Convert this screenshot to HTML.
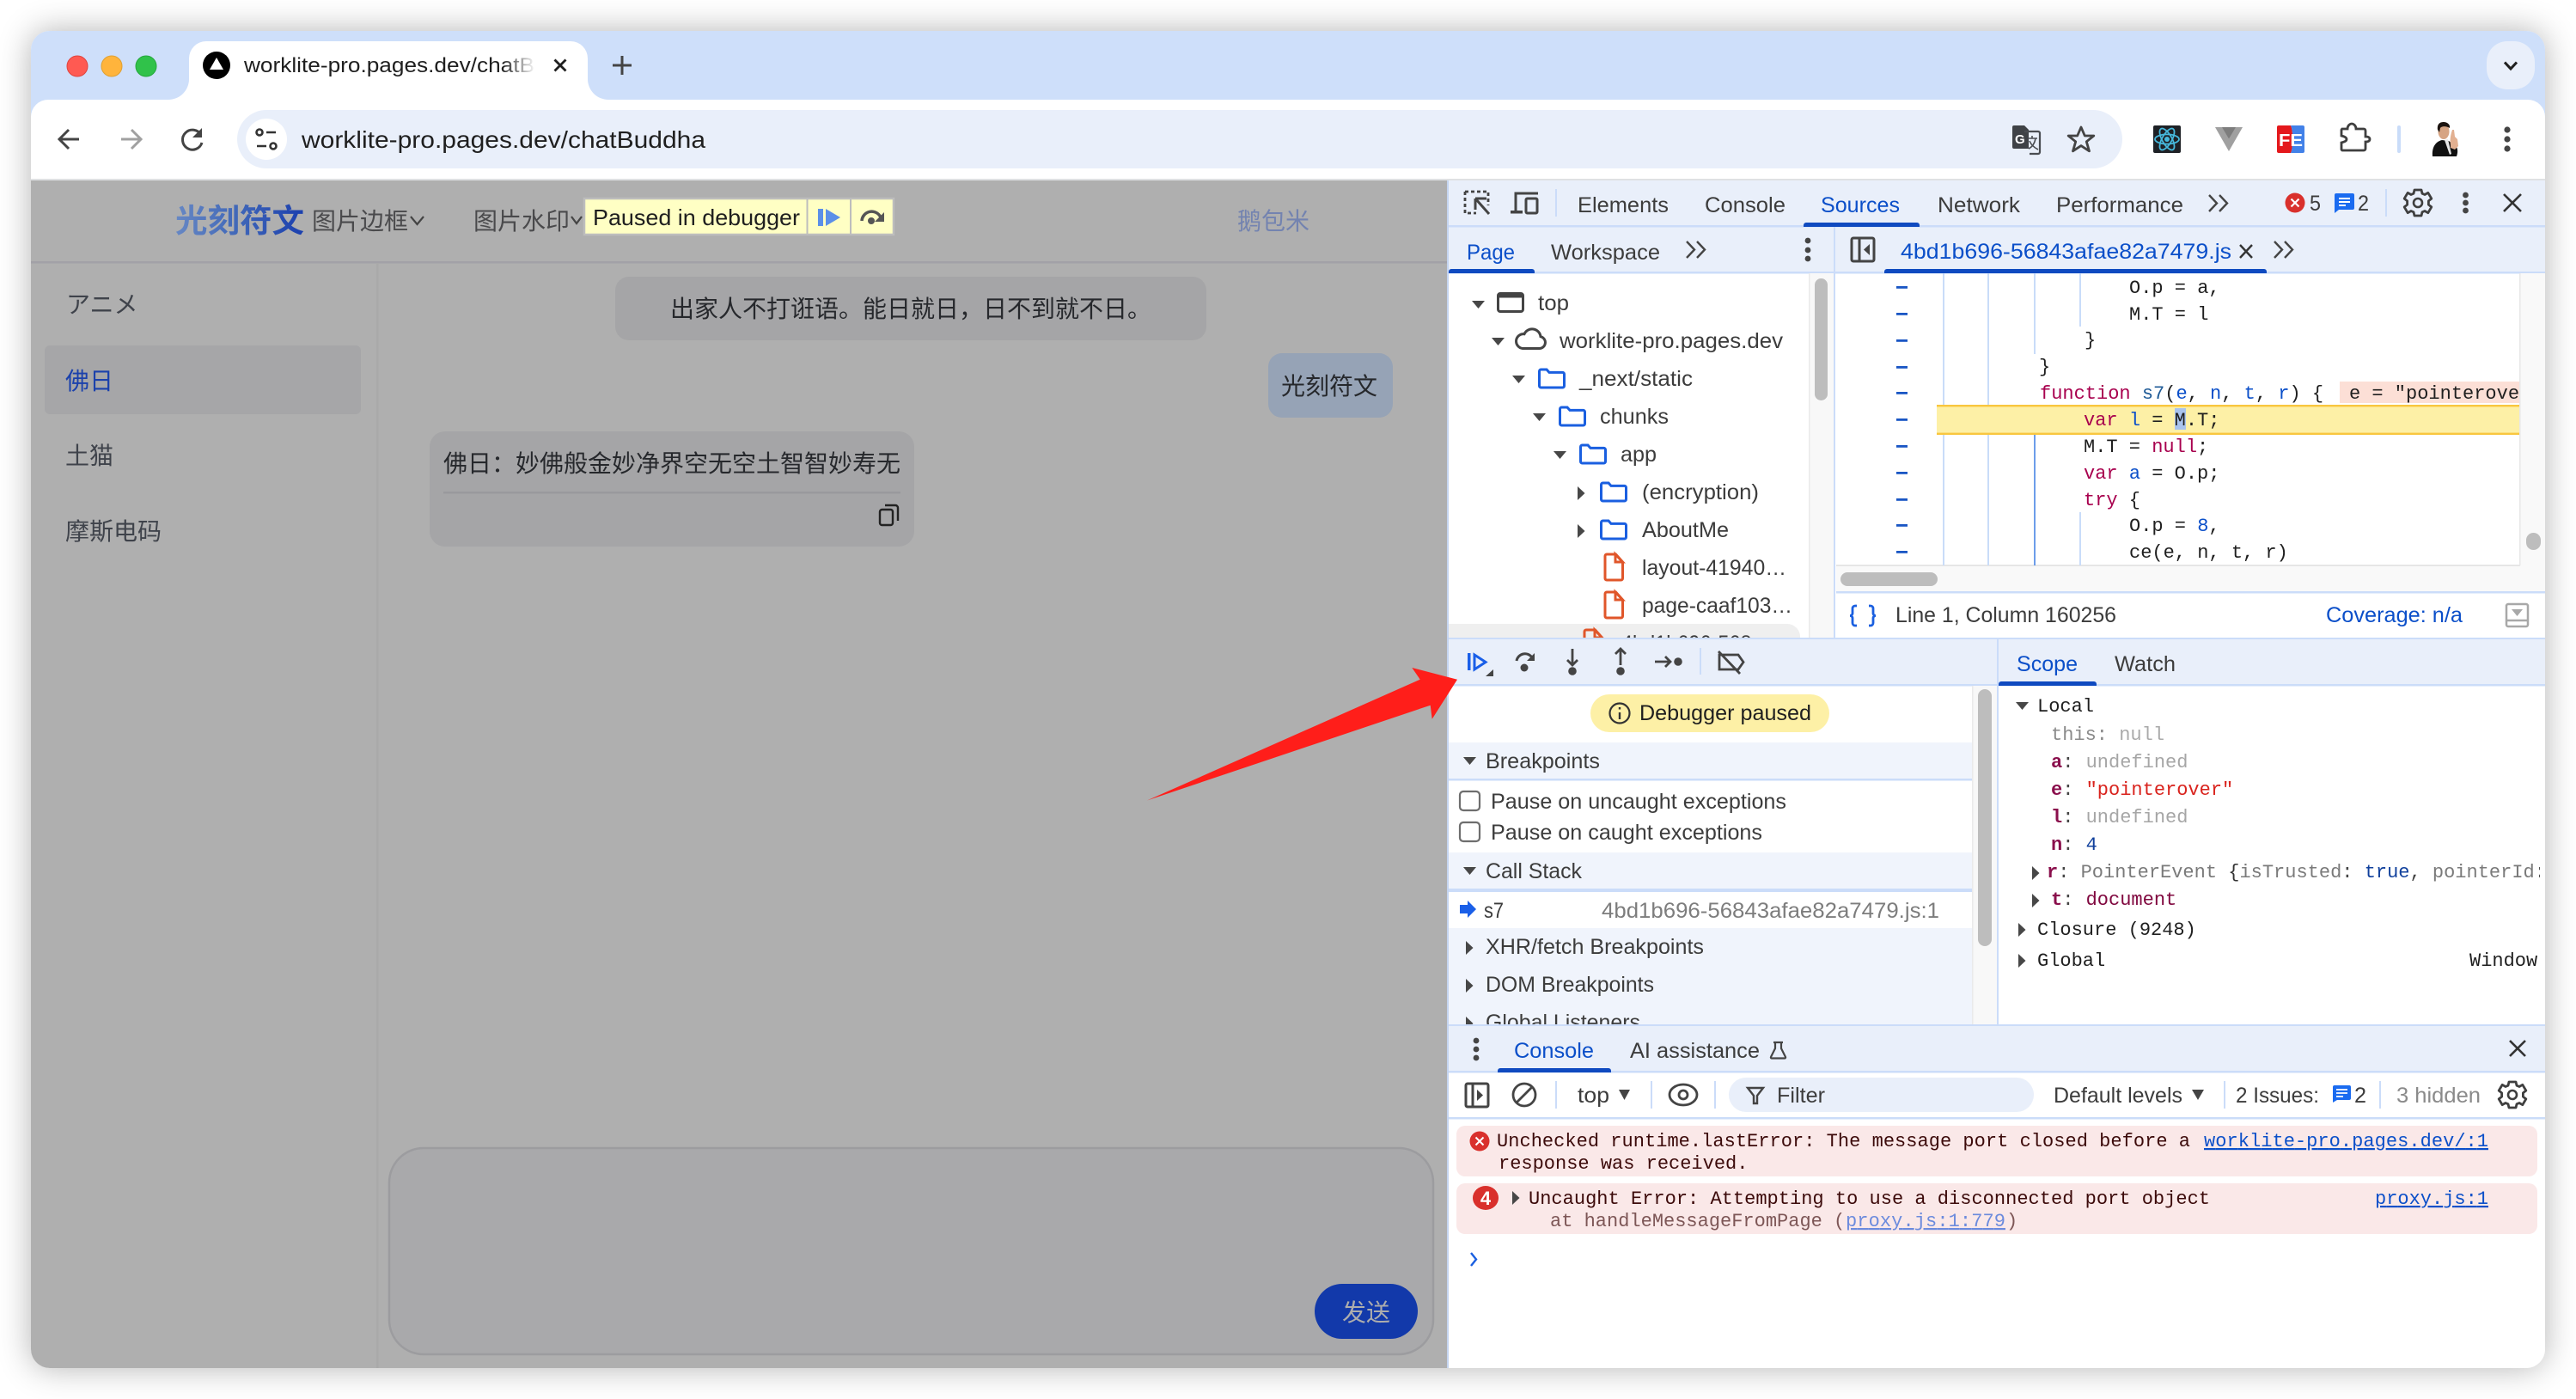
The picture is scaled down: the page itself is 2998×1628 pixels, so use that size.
<!DOCTYPE html>
<html lang="zh">
<head>
<meta charset="utf-8">
<title>worklite-pro.pages.dev/chatBuddha</title>
<style>
html,body{margin:0;padding:0;background:#fff;width:2998px;height:1628px;overflow:hidden}
#win{position:absolute;left:36px;top:36px;width:2926px;height:1556px;border-radius:22px;box-shadow:0 0 38px rgba(0,0,0,.3)}
svg{position:absolute;left:0;top:0}
text{white-space:pre}
.s{font-family:"Liberation Sans","Noto Sans CJK SC",sans-serif;fill:#1f1f1f}
.d{font-family:"Liberation Sans",sans-serif;font-size:25px;fill:#3c3c3c}
.b{fill:#0b4fc9}
.m{font-family:"Liberation Mono",monospace;font-size:22px;fill:#1f1f1f}
.c{font-family:"Liberation Sans","Noto Sans CJK SC",sans-serif;font-size:28px;fill:#26282c}
.i{fill:none;stroke:#444;stroke-width:2.6}
</style>
</head>
<body>
<div id="win"></div>
<svg width="2998" height="1628" viewBox="0 0 2998 1628" xmlns="http://www.w3.org/2000/svg">
<defs>
<clipPath id="w"><rect x="36" y="36" width="2926" height="1556" rx="22"/></clipPath>
<clipPath id="nav"><rect x="1686" y="318" width="420" height="424"/></clipPath>
<clipPath id="dbg"><rect x="1686" y="800" width="610" height="392"/></clipPath>
<clipPath id="code"><rect x="2137" y="318" width="795" height="340"/></clipPath>
<clipPath id="scope"><rect x="2326" y="800" width="630" height="392"/></clipPath>
<linearGradient id="logo" x1="0" x2="1" y1="0" y2="0"><stop offset="0" stop-color="#6788c4"/><stop offset=".5" stop-color="#3f66b8"/><stop offset="1" stop-color="#1b3fae"/></linearGradient>
<linearGradient id="fade" x1="0" x2="1" y1="0" y2="0"><stop offset="0" stop-color="#fff" stop-opacity="0"/><stop offset="1" stop-color="#fff"/></linearGradient>
<path id="folder" d="M1.5 4 a2 2 0 0 1 2-2 h6.5 l3 3.4 h15.5 a2 2 0 0 1 2 2 V21 a2 2 0 0 1-2 2 h-25 a2 2 0 0 1-2-2z" fill="none" stroke="#1a5fe0" stroke-width="3"/>
<path id="file" d="M2 3 a2 2 0 0 1 2-2 h10.5 l8 9 V29 a2 2 0 0 1-2 2 h-16.5 a2 2 0 0 1-2-2z M14 1 v9 h8.5 z" fill="none" stroke="#e0562a" stroke-width="3"/>
<path id="td" d="M0 0h15l-7.5 9z" fill="#474747"/>
<path id="tr" d="M0 0l8.5 8-8.5 8z" fill="#474747"/>
<path id="gear" d="M-4-15h8l1 4.2 3 1.3 3.8-2.2 4 6.8-3.4 2.7v4.4l3.4 2.7-4 6.8-3.8-2.2-3 1.3-1 4.2h-8l-1-4.2-3-1.3-3.8 2.2-4-6.8 3.4-2.7v-4.4l-3.4-2.7 4-6.8 3.8 2.2 3-1.3z" fill="none" stroke="#3f3f3f" stroke-width="2.8" stroke-linejoin="round"/>
</defs>

<g clip-path="url(#w)">
<!-- frame -->
<rect x="36" y="36" width="2926" height="80" fill="#cedffa"/>
<rect x="36" y="116" width="2926" height="92" fill="#fff"/>
<path d="M36 136 a20 20 0 0 1 20-20 H36z" fill="#cedffa"/>
<path d="M2962 136 a20 20 0 0 0-20-20 h20z" fill="#cedffa"/>
<rect x="36" y="208" width="2926" height="2" fill="#dfe1e3"/>

<!-- traffic lights -->
<circle cx="90" cy="77" r="12" fill="#ff5a52" stroke="#e0443e" stroke-width="1"/>
<circle cx="130" cy="77" r="12" fill="#ffb43c" stroke="#dea034" stroke-width="1"/>
<circle cx="170" cy="77" r="12" fill="#30c24a" stroke="#26a83c" stroke-width="1"/>

<!-- tab -->
<path d="M196 116 a24 24 0 0 0 24-24 V68 a20 20 0 0 1 20-20 H664 a20 20 0 0 1 20 20 V92 a24 24 0 0 0 24 24z" fill="#fff"/>
<circle cx="252" cy="76" r="16" fill="#000"/>
<path d="M252 67 l8 14 h-16z" fill="#fff"/>
<text class="s" x="284" y="84" font-size="24" textLength="338" lengthAdjust="spacingAndGlyphs">worklite-pro.pages.dev/chatB</text>
<rect x="585" y="60" width="38" height="34" fill="url(#fade)"/>
<path d="M645.500 69.500 l13 13 M658.500 69.500 l-13 13" stroke="#1f1f1f" stroke-width="2.800" fill="none"/>
<path d="M724 65 v22 M713 76 h22" stroke="#444" stroke-width="3" fill="none"/>
<rect x="2894" y="48" width="56" height="56" rx="24" fill="#e9effa"/>
<path d="M2915 72.500 l7 7.500 7-7.500" stroke="#1f1f1f" stroke-width="3" fill="none"/>

<!-- toolbar -->
<path d="M92 162 H70 M80 151 L69 162 80 173" fill="none" stroke="#444" stroke-width="3"/>
<path d="M141 162 H163 M153 151 L164 162 153 173" fill="none" stroke="#a0a0a0" stroke-width="3"/>
<path d="M234 157 A11.500 11.500 0 1 0 235 166" fill="none" stroke="#444" stroke-width="3"/>
<path d="M235 149 v11 h-11z" fill="#444"/>
<rect x="276" y="128" width="2194" height="68" rx="34" fill="#e9effa"/>
<circle cx="310" cy="162" r="24" fill="#fff"/>
<g fill="none" stroke="#333" stroke-width="2.600"><circle cx="302" cy="154" r="3.500"/><path d="M310 154 h11 M299 170 h11"/><circle cx="318" cy="170" r="3.500"/></g>
<text class="s" x="351" y="172" font-size="28" textLength="470" lengthAdjust="spacingAndGlyphs">worklite-pro.pages.dev/chatBuddha</text>

<!-- translate icon -->
<path d="M2344 146 h12 l5 5 v22 h-17 a2 2 0 0 1-2-2 v-23 a2 2 0 0 1 2-2z" fill="#3f4246"/>
<path d="M2356 153 h16 a2 2 0 0 1 2 2 v22 a2 2 0 0 1-2 2 h-10" fill="none" stroke="#4a4d52" stroke-width="2.200"/>
<text x="2345" y="167" font-family="Liberation Sans,sans-serif" font-weight="bold" font-size="15" fill="#fff">G</text>
<path d="M2360 161 h11 M2365 158 v3 M2369 161 c-1 6-4 10-8 12 M2362 164 c2 5 6 8 10 10" fill="none" stroke="#4a4d52" stroke-width="1.600"/>
<!-- star -->
<path d="M2422 148 l4.300 10 h10.500 l-8.500 6.800 3.200 11 -9.500-6.200 -9.500 6.200 3.200-11 -8.500-6.800 h10.500z" fill="none" stroke="#444" stroke-width="2.800" stroke-linejoin="round"/>
<!-- react -->
<g transform="translate(2 0)">
<rect x="2504" y="146" width="32" height="32" rx="2" fill="#1e2126"/>
<g fill="none" stroke="#46b8dc" stroke-width="1.800"><ellipse cx="2520" cy="162" rx="14" ry="5.600"/><ellipse cx="2520" cy="162" rx="14" ry="5.600" transform="rotate(60 2520 162)"/><ellipse cx="2520" cy="162" rx="14" ry="5.600" transform="rotate(120 2520 162)"/></g>
<circle cx="2520" cy="162" r="3" fill="#46b8dc"/>
</g>
<!-- vue -->
<g transform="translate(3 0)">
<path d="M2575 148 h32 l-16 28z" fill="#a0a0a0"/>
<path d="M2583 148 h16 l-8 13.500z" fill="#7d7d7d"/>
</g>
<!-- FE -->
<g transform="translate(2 0)">
<path d="M2648 148 a2 2 0 0 1 2-2 h14 c3 6 3 26 0 32 h-14 a2 2 0 0 1-2-2z" fill="#e4181c"/>
<path d="M2664 146 h14 a2 2 0 0 1 2 2 v28 a2 2 0 0 1-2 2 h-14 c3-6 3-26 0-32z" fill="#4281e8"/>
<text x="2650" y="170" font-family="Liberation Sans,sans-serif" font-weight="bold" font-size="20" fill="#fff" textLength="28" lengthAdjust="spacingAndGlyphs">FE</text>
</g>
<!-- puzzle -->
<path d="M2725 150 h7 c0-4 3-6 5-6 s5 2 5 6 h9 a2 2 0 0 1 2 2 v7 c4 0 5 1.500 5 3 s-1 3-5 3 v8 a2 2 0 0 1-2 2 h-25 a2 2 0 0 1-1-2 v-7 c4-1 6-2 6-4 s-2-3-6-4 v-6 a2 2 0 0 1 1-2z" fill="none" stroke="#3f3f3f" stroke-width="2.800"/>
<rect x="2790" y="146" width="4" height="32" rx="2" fill="#c9dcf9"/>
<!-- avatar -->
<g transform="translate(1 0)">
<path d="M2830 182 c-1-10 3-17 11-19 l8 1 9 7 c2 4 1 8 0 11z" fill="#111"/>
<ellipse cx="2843" cy="153" rx="6.500" ry="9" fill="#d6a483"/>
<path d="M2836 151 c-1-7 3-9 7-9 s8 3 7 7 c-3-2-9-3-11 0 l-1 5z" fill="#1c1410"/>
<path d="M2844 163 l6 17 2-1 -4-17z" fill="#e8e8e8"/>
<path d="M2851 168 c-1-5 0-11 2-17 l2 0 1 8 3 3 1 8 -4 4 -5-2z" fill="#e2b091"/>
</g>
<circle cx="2918" cy="151" r="3.600" fill="#444"/><circle cx="2918" cy="162" r="3.600" fill="#444"/><circle cx="2918" cy="173" r="3.600" fill="#444"/>

<!-- page -->
<rect x="36" y="210" width="1648" height="1382" fill="#afafaf"/>
<rect x="36" y="304" width="1648" height="2.500" fill="#a2a1a7"/>
<rect x="438" y="306" width="2.500" height="1286" fill="#a9a9a9"/>
<text x="204" y="270" font-family="'Liberation Sans','Noto Sans CJK SC',sans-serif" font-weight="bold" font-size="37.500" fill="url(#logo)">光刻符文</text>
<text class="c" x="363" y="267" style="fill:#4a4a4c">图片边框</text>
<path d="M478 252 l7.500 9 7.500-9" fill="none" stroke="#444" stroke-width="2.200"/>
<text class="c" x="551" y="267" style="fill:#4a4a4c">图片水印</text>
<path d="M665 252 l6 8 6-8" fill="none" stroke="#444" stroke-width="2.200"/>
<text class="c" x="1440" y="267" style="fill:#7383b0">鹅包米</text>

<text class="c" x="77" y="364" style="font-family:'Liberation Sans','Noto Sans CJK JP',sans-serif;fill:#3f434b">アニメ</text>
<rect x="52" y="402" width="368" height="80" rx="6" fill="#a6a6a8"/>
<text class="c" x="76" y="453" style="fill:#1b41ac">佛日</text>
<text class="c" x="76" y="540" style="fill:#3f434b">土猫</text>
<text class="c" x="76" y="628" style="fill:#3f434b">摩斯电码</text>

<rect x="716" y="322" width="688" height="74" rx="16" fill="#a5a5a7"/>
<text class="c" x="780" y="369">出家人不打诳语。能日就日，日不到就不日。</text>
<rect x="1476" y="411" width="145" height="75" rx="16" fill="#96a3b6"/>
<text class="c" x="1491" y="459">光刻符文</text>
<rect x="500" y="502" width="564" height="134" rx="18" fill="#a5a5a7"/>
<text class="c" x="516" y="549">佛日：妙佛般金妙净界空无空土智智妙寿无</text>
<rect x="516" y="572" width="532" height="2.500" fill="#99999d"/>
<rect x="1024" y="593" width="15" height="18" rx="2.500" fill="none" stroke="#222" stroke-width="2.400"/>
<path d="M1030 588 h12 a3 3 0 0 1 3 3 v15" fill="none" stroke="#222" stroke-width="2.400"/>

<rect x="453" y="1336" width="1215" height="240" rx="40" fill="#a9a9ab" stroke="#9c9c9f" stroke-width="2.500"/>
<rect x="1530" y="1494" width="120" height="64" rx="32" fill="#1239aa"/>
<text class="c" x="1562" y="1537" style="fill:#adadad">发送</text>

<!-- paused banner -->
<rect x="680" y="231" width="360" height="42" fill="#ffffc4" stroke="#bdbdbd" stroke-width="2.500"/>
<text class="s" x="690" y="262" font-size="26" textLength="241" lengthAdjust="spacingAndGlyphs">Paused in debugger</text>
<path d="M939.500 231 v42 M990 231 v42" stroke="#bdbdbd" stroke-width="2"/>
<rect x="952" y="243" width="6" height="20" fill="#5b8fe8"/><path d="M961 243 l17 10-17 10z" fill="#5b8fe8"/>
<path d="M1003 257 a11.500 11.500 0 0 1 22-4" fill="none" stroke="#555" stroke-width="3.500"/><path d="M1029 247 v11 h-11z" fill="#555"/><circle cx="1014" cy="257" r="4" fill="#555"/>

<!-- devtools -->
<rect x="1684" y="210" width="1278" height="1382" fill="#fff"/>
<rect x="1684" y="210" width="2" height="1382" fill="#c4d4f0"/>
<rect x="1686" y="210" width="1276" height="107" fill="#e9effa"/>
<rect x="1686" y="262" width="1276" height="2.500" fill="#cbdcf9"/>
<rect x="1686" y="316" width="1276" height="2.500" fill="#cbdcf9"/>

<!-- inspect icon -->
<path d="M1705 223 h27 v16 M1705 223 v25 h13" fill="none" stroke="#444" stroke-width="2.800" stroke-dasharray="4 3"/>
<path d="M1717 231 h13 M1717 231 v13 M1717 231 l16 18" fill="none" stroke="#444" stroke-width="3"/>
<!-- device icon -->
<path d="M1764 247 v-22 h26" fill="none" stroke="#444" stroke-width="3"/><rect x="1758" y="245" width="14" height="3.500" fill="#444"/><rect x="1776" y="231" width="13" height="17" rx="1.500" fill="none" stroke="#444" stroke-width="3"/>
<rect x="1810" y="220" width="2" height="32" fill="#cbdcf9"/>

<text class="d" x="1836" y="247" textLength="106" lengthAdjust="spacingAndGlyphs">Elements</text>
<text class="d" x="1984" y="247" textLength="94" lengthAdjust="spacingAndGlyphs">Console</text>
<text class="d b" x="2119" y="247" textLength="92" lengthAdjust="spacingAndGlyphs" style="fill:#0b4fc9">Sources</text>
<text class="d" x="2255" y="247" textLength="96" lengthAdjust="spacingAndGlyphs">Network</text>
<text class="d" x="2393" y="247" textLength="148" lengthAdjust="spacingAndGlyphs">Performance</text>
<path d="M2099 264 v-2 a3 3 0 0 1 3-3 h129 a3 3 0 0 1 3 3 v2z" fill="#0f4ac0"/>
<path d="M2571 227 l9 9.500-9 9.500 M2583 227 l9 9.500-9 9.500" fill="none" stroke="#444" stroke-width="2.400"/>
<circle cx="2671" cy="236" r="11.500" fill="#d9302c"/>
<path d="M2666.500 231.500 l9 9 M2675.500 231.500 l-9 9" stroke="#fff" stroke-width="2.200"/>
<text class="d" x="2688" y="245" textLength="13" lengthAdjust="spacingAndGlyphs">5</text>
<path d="M2717 227 a2 2 0 0 1 2-2 h19 a2 2 0 0 1 2 2 v15 a2 2 0 0 1-2 2 h-16 l-5 4z" fill="#1a6bf0"/>
<path d="M2722 231 h13 M2722 235 h13 M2722 239 h8" stroke="#fff" stroke-width="2"/>
<text class="d" x="2744" y="245" textLength="13" lengthAdjust="spacingAndGlyphs">2</text>
<rect x="2776" y="220" width="2" height="32" fill="#cbdcf9"/>
<use href="#gear" x="2814" y="236"/><circle cx="2814" cy="236" r="5" fill="none" stroke="#3f3f3f" stroke-width="2.600"/>
<circle cx="2869.500" cy="227" r="3.400" fill="#444"/><circle cx="2869.500" cy="236" r="3.400" fill="#444"/><circle cx="2869.500" cy="245" r="3.400" fill="#444"/>
<path d="M2914 226 l20 20 M2934 226 l-20 20" stroke="#333" stroke-width="2.600" fill="none"/>

<text class="d" x="1707" y="302" textLength="56" lengthAdjust="spacingAndGlyphs" style="fill:#0b4fc9">Page</text>
<text class="d" x="1805" y="302" textLength="127" lengthAdjust="spacingAndGlyphs">Workspace</text>
<path d="M1686 318 v-2 a3 3 0 0 1 3-3 h94 a3 3 0 0 1 3 3 v2z" fill="#0f4ac0"/>
<path d="M1963 281 l9 9.500-9 9.500 M1975 281 l9 9.500-9 9.500" fill="none" stroke="#444" stroke-width="2.400"/>
<circle cx="2104" cy="280" r="3.400" fill="#444"/><circle cx="2104" cy="291" r="3.400" fill="#444"/><circle cx="2104" cy="301" r="3.400" fill="#444"/>
<rect x="2134" y="264" width="2" height="480" fill="#cbdcf9"/>
<rect x="2155" y="277" width="26" height="27" rx="2" fill="none" stroke="#444" stroke-width="3"/><path d="M2164 277 v27" stroke="#444" stroke-width="3"/><path d="M2176 284 l-7 6.500 7 6.500z" fill="#444"/>
<text class="d" x="2212" y="301" textLength="385" lengthAdjust="spacingAndGlyphs" style="fill:#0b4fc9">4bd1b696-56843afae82a7479.js</text>
<path d="M2607 285 l14 15 M2621 285 l-14 15" stroke="#333" stroke-width="2.400" fill="none"/>
<path d="M2647 281 l9 9.500-9 9.500 M2659 281 l9 9.500-9 9.500" fill="none" stroke="#444" stroke-width="2.400"/>
<path d="M2193 318 v-2 a3 3 0 0 1 3-3 h439 a3 3 0 0 1 3 3 v2z" fill="#0f4ac0"/>

<!-- navigator -->
<rect x="2105" y="318" width="29" height="424" fill="#f8f8f8"/><rect x="2105" y="318" width="1.500" height="424" fill="#eaeaea"/>
<rect x="2112" y="324" width="15" height="142" rx="7.500" fill="#bdbdbd"/>
<g clip-path="url(#nav)">
<path d="M1686 742 v-16 h394 a15 15 0 0 1 15 16z" fill="#efefef"/>
<use href="#td" x="1713" y="350"/>
<rect x="1743.500" y="341.500" width="29" height="21" rx="2.500" fill="none" stroke="#444" stroke-width="3"/><rect x="1743.500" y="341.500" width="29" height="5" fill="#444"/>
<text class="d" x="1790" y="361" textLength="36" lengthAdjust="spacingAndGlyphs">top</text>
<use href="#td" x="1736" y="393"/>
<path d="M1772 405.500 h20 a7 7 0 0 0 1-13.800 a10 10 0 0 0-19-3 a8 8 0 0 0-2 16.800z" fill="none" stroke="#444" stroke-width="3"/>
<text class="d" x="1815" y="405" textLength="260" lengthAdjust="spacingAndGlyphs">worklite-pro.pages.dev</text>
<use href="#td" x="1760" y="437"/><use href="#folder" x="1790" y="428"/>
<text class="d" x="1838" y="449" textLength="132" lengthAdjust="spacingAndGlyphs">_next/static</text>
<use href="#td" x="1784" y="481"/><use href="#folder" x="1814" y="472"/>
<text class="d" x="1862" y="493" textLength="80" lengthAdjust="spacingAndGlyphs">chunks</text>
<use href="#td" x="1808" y="525"/><use href="#folder" x="1838" y="516"/>
<text class="d" x="1886" y="537" textLength="42" lengthAdjust="spacingAndGlyphs">app</text>
<use href="#tr" x="1836" y="566"/><use href="#folder" x="1862" y="560"/>
<text class="d" x="1911" y="581" textLength="136" lengthAdjust="spacingAndGlyphs">(encryption)</text>
<use href="#tr" x="1836" y="610"/><use href="#folder" x="1862" y="604"/>
<text class="d" x="1911" y="625" textLength="101" lengthAdjust="spacingAndGlyphs">AboutMe</text>
<use href="#file" x="1866" y="644"/>
<text class="d" x="1911" y="669" textLength="168" lengthAdjust="spacingAndGlyphs">layout-41940…</text>
<use href="#file" x="1866" y="688"/>
<text class="d" x="1911" y="713" textLength="175" lengthAdjust="spacingAndGlyphs">page-caaf103…</text>
<use href="#file" x="1842" y="732"/>
<text class="d" x="1887" y="757" textLength="175" lengthAdjust="spacingAndGlyphs">4bd1b696-568…</text>
</g>

<!-- code -->
<rect x="2932" y="318" width="30" height="370" fill="#f9f9f9"/><rect x="2932" y="318" width="1.500" height="340" fill="#e8e8e8"/>
<rect x="2940" y="620" width="17" height="20" rx="8.500" fill="#bdbdbd"/>
<rect x="2137" y="658" width="825" height="30" fill="#f9f9f9"/><rect x="2137" y="657" width="796" height="2" fill="#e6e6e6"/>
<rect x="2142" y="666" width="113" height="16" rx="8" fill="#bdbdbd"/>
<rect x="2137" y="688" width="825" height="2.500" fill="#cbdcf9"/>
<g clip-path="url(#code)">
<g fill="#1a56c4">
<rect x="2207" y="333" width="13" height="2.800"/><rect x="2207" y="364" width="13" height="2.800"/><rect x="2207" y="395" width="13" height="2.800"/><rect x="2207" y="426" width="13" height="2.800"/><rect x="2207" y="456" width="13" height="2.800"/><rect x="2207" y="487" width="13" height="2.800"/><rect x="2207" y="518" width="13" height="2.800"/><rect x="2207" y="549" width="13" height="2.800"/><rect x="2207" y="580" width="13" height="2.800"/><rect x="2207" y="610" width="13" height="2.800"/><rect x="2207" y="641" width="13" height="2.800"/>
</g>
<g fill="#c9dcf9">
<rect x="2261" y="318" width="2" height="153"/><rect x="2261" y="506" width="2" height="152"/>
<rect x="2313" y="318" width="2" height="153"/><rect x="2313" y="506" width="2" height="152"/>
<rect x="2367" y="318" width="2" height="94"/>
<rect x="2420" y="318" width="2" height="62"/><rect x="2420" y="596" width="2" height="62"/>
</g>
<rect x="2367" y="506" width="2" height="152" fill="#6d9dea"/>
<rect x="2723" y="444" width="209" height="25" fill="#fcdfd6"/>
<rect x="2254" y="471" width="678" height="35" fill="#fdf0a6"/>
<rect x="2254" y="471" width="678" height="2.400" fill="#f9c63f"/>
<rect x="2254" y="503.600" width="678" height="2.400" fill="#f9c63f"/>
<rect x="2531" y="475" width="13" height="25" fill="#a8c3ee"/>
<text class="m" x="2478" y="341">O.p = a,</text>
<text class="m" x="2478" y="372">M.T = l</text>
<text class="m" x="2426" y="402">}</text>
<text class="m" x="2373" y="433">}</text>
<text class="m" x="2374" y="464"><tspan fill="#a8004e">function</tspan> <tspan fill="#1e5a96">s7</tspan>(<tspan fill="#0b4fc9">e</tspan>, <tspan fill="#0b4fc9">n</tspan>, <tspan fill="#0b4fc9">t</tspan>, <tspan fill="#0b4fc9">r</tspan>) {</text>
<text class="m" x="2734" y="464">e = "pointerove</text>
<text class="m" x="2425" y="495"><tspan fill="#a8004e">var</tspan> <tspan fill="#0b4fc9">l</tspan> = M.T;</text>
<text class="m" x="2425" y="526">M.T = <tspan fill="#a8004e">null</tspan>;</text>
<text class="m" x="2425" y="557"><tspan fill="#a8004e">var</tspan> <tspan fill="#0b4fc9">a</tspan> = O.p;</text>
<text class="m" x="2425" y="588"><tspan fill="#a8004e">try</tspan> {</text>
<text class="m" x="2478" y="618">O.p = <tspan fill="#0b4fc9">8</tspan>,</text>
<text class="m" x="2478" y="649">ce(e, n, t, r)</text>
</g>
<!-- status bar -->
<path d="M2161 705 h-2 a3 3 0 0 0-3 3 v6 a3 3 0 0 1-3 2.500 a3 3 0 0 1 3 2.500 v6 a3 3 0 0 0 3 3 h2 M2175 705 h2 a3 3 0 0 1 3 3 v6 a3 3 0 0 0 3 2.500 a3 3 0 0 0-3 2.500 v6 a3 3 0 0 1-3 3 h-2" fill="none" stroke="#1a5fe0" stroke-width="2.800"/>
<text class="d" x="2206" y="724" textLength="257" lengthAdjust="spacingAndGlyphs">Line 1, Column 160256</text>
<text class="d" x="2707" y="724" textLength="159" lengthAdjust="spacingAndGlyphs" style="fill:#0b4fc9">Coverage: n/a</text>
<rect x="2917" y="703" width="25" height="26" rx="2" fill="none" stroke="#a8a8a8" stroke-width="2.500"/><path d="M2917 722 h25" stroke="#a8a8a8" stroke-width="2.500"/><path d="M2923 709 h13 l-6.500 8z" fill="#a8a8a8"/>

<!-- debugger toolbars -->
<rect x="1686" y="742" width="1276" height="2.500" fill="#cbdcf9"/>
<rect x="1686" y="744" width="1276" height="53" fill="#e9effa"/>
<rect x="1686" y="796" width="1276" height="2.500" fill="#cbdcf9"/>
<rect x="2324" y="744" width="2" height="448" fill="#cbdcf9"/>
<rect x="1708" y="760" width="3.500" height="20" fill="#1a5fe8"/>
<path d="M1716 762 l13 8.500-13 8.500z" fill="none" stroke="#1a5fe8" stroke-width="3"/>
<path d="M1738 779 v8 h-9z" fill="#444"/>
<path d="M1765 769 a10 10 0 0 1 18-4" fill="none" stroke="#444" stroke-width="3"/><path d="M1786 760 v9 h-9z" fill="#444"/><circle cx="1774" cy="777" r="4.500" fill="#444"/>
<path d="M1830 755 v19 M1824 768 l6 6 6-6" fill="none" stroke="#444" stroke-width="2.800"/><circle cx="1830" cy="781" r="4.800" fill="#444"/>
<path d="M1886 774 v-19 M1880 761 l6-6 6 6" fill="none" stroke="#444" stroke-width="2.800"/><circle cx="1886" cy="781" r="4.800" fill="#444"/>
<path d="M1926 770 h18 M1938 764 l6 6-6 6" fill="none" stroke="#444" stroke-width="2.800"/><circle cx="1953" cy="770" r="4.800" fill="#444"/>
<rect x="1978" y="754" width="2" height="31" fill="#cbdcf9"/>
<path d="M2005 762 h18 l6 8.500-6 8.500 h-22 v-17z M2000 758 l25 26" fill="none" stroke="#444" stroke-width="2.800"/>

<!-- debugger sidebar -->
<rect x="2295" y="798" width="29" height="394" fill="#f8f8f8"/><rect x="2295" y="798" width="1.500" height="394" fill="#eaeaea"/>
<rect x="2302" y="802" width="16" height="299" rx="8" fill="#bdbdbd"/>
<rect x="1851" y="808" width="278" height="44" rx="22" fill="#fdf0a6"/>
<circle cx="1885" cy="830" r="11.500" fill="none" stroke="#333" stroke-width="2.200"/><path d="M1885 829 v8 M1885 823 v2.500" stroke="#333" stroke-width="2.400"/>
<text class="d" x="1908" y="838" textLength="200" lengthAdjust="spacingAndGlyphs" style="fill:#1f1f1f">Debugger paused</text>
<rect x="1686" y="864" width="609" height="42" fill="#f0f4fc"/><rect x="1686" y="906" width="609" height="2.500" fill="#cbdcf9"/>
<use href="#td" x="1703" y="881"/>
<text class="d" x="1729" y="894" textLength="133" lengthAdjust="spacingAndGlyphs">Breakpoints</text>
<rect x="1699" y="921" width="23" height="22" rx="4" fill="none" stroke="#6e6e6e" stroke-width="2.200"/>
<text class="d" x="1735" y="941" textLength="344" lengthAdjust="spacingAndGlyphs">Pause on uncaught exceptions</text>
<rect x="1699" y="957" width="23" height="22" rx="4" fill="none" stroke="#6e6e6e" stroke-width="2.200"/>
<text class="d" x="1735" y="977" textLength="316" lengthAdjust="spacingAndGlyphs">Pause on caught exceptions</text>
<rect x="1686" y="992" width="609" height="42" fill="#f0f4fc"/><rect x="1686" y="1034" width="609" height="4" fill="#cbdcf9"/>
<use href="#td" x="1703" y="1009"/>
<text class="d" x="1729" y="1022" textLength="112" lengthAdjust="spacingAndGlyphs">Call Stack</text>
<path d="M1699 1053 h9 v-5 l10 10-10 10 v-5 h-9z" fill="#1a5fe8"/>
<text class="d" x="1727" y="1068" textLength="23" lengthAdjust="spacingAndGlyphs">s7</text>
<text class="d" x="1864" y="1068" textLength="393" lengthAdjust="spacingAndGlyphs" style="fill:#7d7d7d">4bd1b696-56843afae82a7479.js:1</text>
<rect x="1686" y="1080" width="609" height="113" fill="#f0f4fc"/>
<g clip-path="url(#dbg)">
<use href="#tr" x="1706" y="1095"/><text class="d" x="1729" y="1110" textLength="254" lengthAdjust="spacingAndGlyphs">XHR/fetch Breakpoints</text>
<use href="#tr" x="1706" y="1139"/><text class="d" x="1729" y="1154" textLength="196" lengthAdjust="spacingAndGlyphs">DOM Breakpoints</text>
<use href="#tr" x="1706" y="1183"/><text class="d" x="1729" y="1198" textLength="180" lengthAdjust="spacingAndGlyphs">Global Listeners</text>
</g>

<!-- scope -->
<text class="d" x="2347" y="781" textLength="71" lengthAdjust="spacingAndGlyphs" style="fill:#0b4fc9">Scope</text>
<text class="d" x="2461" y="781" textLength="71" lengthAdjust="spacingAndGlyphs">Watch</text>
<path d="M2326 798 v-2 a3 3 0 0 1 3-3 h108 a3 3 0 0 1 3 3 v2z" fill="#0f4ac0"/>
<g clip-path="url(#scope)">
<path d="M2346 817 h15 l-7.500 9z" fill="#474747"/>
<text class="m" x="2371" y="828">Local</text>
<text class="m" x="2387" y="861" style="fill:#8a8a8a">this:<tspan fill="#aaa"> null</tspan></text>
<text class="m" x="2387" y="893" style="fill:#444"><tspan font-weight="bold" fill="#8a0f4c">a</tspan>: <tspan dx="1" fill="#a6a6a6">undefined</tspan></text>
<text class="m" x="2387" y="925" style="fill:#444"><tspan font-weight="bold" fill="#8a0f4c">e</tspan>: <tspan dx="1" fill="#d9231d">"pointerover"</tspan></text>
<text class="m" x="2387" y="957" style="fill:#444"><tspan font-weight="bold" fill="#8a0f4c">l</tspan>: <tspan dx="1" fill="#a6a6a6">undefined</tspan></text>
<text class="m" x="2387" y="989" style="fill:#444"><tspan font-weight="bold" fill="#8a0f4c">n</tspan>: <tspan dx="1" fill="#10409c">4</tspan></text>
<use href="#tr" x="2365" y="1008"/>
<text class="m" x="2382" y="1021" style="fill:#444"><tspan font-weight="bold" fill="#8a0f4c">r</tspan>: <tspan fill="#7a7a7a">PointerEvent </tspan><tspan fill="#333">{</tspan><tspan fill="#7a7a7a">isTrusted</tspan>: <tspan fill="#10409c">true</tspan>, <tspan fill="#7a7a7a">pointerId</tspan>:</text>
<use href="#tr" x="2365" y="1040"/>
<text class="m" x="2387" y="1053" style="fill:#444"><tspan font-weight="bold" fill="#8a0f4c">t</tspan>: <tspan dx="1" fill="#80083f">document</tspan></text>
<use href="#tr" x="2349" y="1074"/><text class="m" x="2371" y="1088">Closure (9248)</text>
<use href="#tr" x="2349" y="1110"/><text class="m" x="2371" y="1124">Global</text>
<text class="m" x="2874" y="1124">Window</text>
</g>

<!-- console drawer -->
<rect x="1686" y="1192" width="1276" height="2.500" fill="#cbdcf9"/>
<rect x="1686" y="1194" width="1276" height="53" fill="#e9effa"/>
<rect x="1686" y="1246" width="1276" height="2.500" fill="#cbdcf9"/>
<circle cx="1718" cy="1211" r="3.400" fill="#444"/><circle cx="1718" cy="1221" r="3.400" fill="#444"/><circle cx="1718" cy="1231" r="3.400" fill="#444"/>
<text class="d" x="1762" y="1231" textLength="93" lengthAdjust="spacingAndGlyphs" style="fill:#0b4fc9">Console</text>
<path d="M1743 1248 v-2 a3 3 0 0 1 3-3 h126 a3 3 0 0 1 3 3 v2z" fill="#0f4ac0"/>
<text class="d" x="1897" y="1231" textLength="151" lengthAdjust="spacingAndGlyphs">AI assistance</text>
<path d="M2064 1213 h11 M2066 1214 v6 l-5 10 a1 1 0 0 0 1 1.500 h15 a1 1 0 0 0 1-1.500 l-5-10 v-6" fill="none" stroke="#444" stroke-width="2.200"/>
<path d="M2921 1211 l18 18 M2939 1211 l-18 18" stroke="#333" stroke-width="2.600" fill="none"/>

<rect x="1706" y="1261" width="26" height="27" rx="2" fill="none" stroke="#444" stroke-width="3"/><path d="M1714 1261 v27" stroke="#444" stroke-width="3"/><path d="M1719 1268 l7 6.500-7 6.500z" fill="#444"/>
<circle cx="1774" cy="1274" r="13" fill="none" stroke="#444" stroke-width="2.800"/><path d="M1765 1283 l18-18" stroke="#444" stroke-width="2.800"/>
<rect x="1810" y="1258" width="2" height="32" fill="#cbdcf9"/>
<text class="d" x="1836" y="1283" textLength="37" lengthAdjust="spacingAndGlyphs">top</text>
<path d="M1884 1268 h13 l-6.500 12z" fill="#444"/>
<rect x="1921" y="1258" width="2" height="32" fill="#cbdcf9"/>
<ellipse cx="1959" cy="1274" rx="16" ry="12" fill="none" stroke="#444" stroke-width="2.800"/><circle cx="1959" cy="1274" r="5" fill="none" stroke="#444" stroke-width="2.800"/>
<rect x="1995" y="1258" width="2" height="32" fill="#cbdcf9"/>
<rect x="2012" y="1254" width="355" height="40" rx="20" fill="#e9effa"/>
<path d="M2034 1266 h18 l-7 9 v9 h-4 v-9z" fill="none" stroke="#444" stroke-width="2.400"/>
<text class="d" x="2068" y="1283" textLength="56" lengthAdjust="spacingAndGlyphs">Filter</text>
<text class="d" x="2390" y="1283" textLength="150" lengthAdjust="spacingAndGlyphs">Default levels</text>
<path d="M2551 1268 h14 l-7 12z" fill="#444"/>
<rect x="2588" y="1258" width="2" height="32" fill="#cbdcf9"/>
<text class="d" x="2602" y="1283" textLength="97" lengthAdjust="spacingAndGlyphs">2 Issues:</text>
<path d="M2715 1265 a2 2 0 0 1 2-2 h17 a2 2 0 0 1 2 2 v13 a2 2 0 0 1-2 2 h-14 l-5 3z" fill="#1a6bf0"/>
<path d="M2719 1268 h13 M2719 1272 h13 M2719 1276 h8" stroke="#fff" stroke-width="1.800"/>
<text class="d" x="2740" y="1283" textLength="14" lengthAdjust="spacingAndGlyphs">2</text>
<rect x="2769" y="1258" width="2" height="32" fill="#cbdcf9"/>
<text class="d" x="2789" y="1283" textLength="98" lengthAdjust="spacingAndGlyphs" style="fill:#8a8a8a">3 hidden</text>
<use href="#gear" x="2924" y="1274"/><circle cx="2924" cy="1274" r="5" fill="none" stroke="#3f3f3f" stroke-width="2.600"/>
<rect x="1686" y="1300" width="1276" height="2.500" fill="#cbdcf9"/>

<rect x="1695" y="1310" width="1258" height="59" rx="10" fill="#fae8e8"/>
<rect x="1695" y="1377" width="1258" height="59" rx="10" fill="#fae8e8"/>
<circle cx="1722" cy="1328" r="11.500" fill="#d9302c"/>
<path d="M1717.500 1323.500 l9 9 M1726.500 1323.500 l-9 9" stroke="#fff" stroke-width="2"/>
<text class="m" x="1742" y="1334" textLength="807" lengthAdjust="spacing" style="fill:#3c0a0a">Unchecked runtime.lastError: The message port closed before a</text>
<text class="m" x="2565" y="1334" textLength="331" style="fill:#0b4fc9;text-decoration:underline">worklite-pro.pages.dev/:1</text>
<text class="m" x="1744" y="1360" style="fill:#3c0a0a">response was received.</text>
<ellipse cx="1729" cy="1394" rx="15" ry="14" fill="#d9302c"/>
<text x="1729" y="1402" text-anchor="middle" font-family="Liberation Sans,sans-serif" font-weight="bold" font-size="22" fill="#fff">4</text>
<use href="#tr" x="1760" y="1386"/>
<text class="m" x="1779" y="1401" textLength="793" style="fill:#3c0a0a">Uncaught Error: Attempting to use a disconnected port object</text>
<text class="m" x="2764" y="1401" textLength="132" style="fill:#0b4fc9;text-decoration:underline">proxy.js:1</text>
<text class="m" x="1804" y="1427" style="fill:#7d5656">at handleMessageFromPage (</text>
<text class="m" x="2148" y="1427" textLength="186" style="fill:#6c8bdd;text-decoration:underline">proxy.js:1:779</text>
<text class="m" x="2335" y="1427" style="fill:#7d5656">)</text>
<path d="M1712 1458 l6 7.500-6 7.500" fill="none" stroke="#1a5fe0" stroke-width="2.400"/>

<!-- red arrow -->
<path d="M1335 931.500 L1652.700 790.700 L1643.300 777 L1696 790.700 L1666.700 836.700 L1664.700 820.700z" fill="#ff1e1a"/>
</g>
</svg>
</body>
</html>
